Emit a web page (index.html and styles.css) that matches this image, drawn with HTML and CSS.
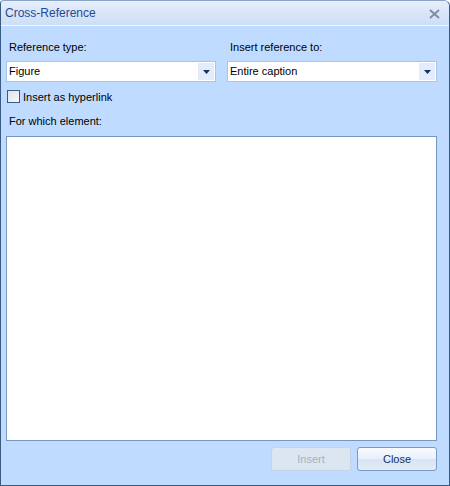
FILE: index.html
```html
<!DOCTYPE html>
<html>
<head>
<meta charset="utf-8">
<link rel="stylesheet" href="styles.css">
</head>
<body>
<div class="window">
  <div class="titlebar">
    <span class="title">Cross-Reference</span>
    <svg class="close-x" width="11" height="10" viewBox="0 0 11 10"><path d="M1 1 L10 9 M10 1 L1 9" stroke="#7a8aa0" stroke-width="1.7"/></svg>
  </div>
  <div class="content">
    <div class="row-two">
      <div class="field">
        <div class="label">Reference type:</div>
        <div class="combo"><span class="combo-text">Figure</span><span class="combo-btn"><svg width="7" height="4" viewBox="0 0 7 4"><path d="M0 0 H7 L3.5 4 Z" fill="#15306b"/></svg></span></div>
      </div>
      <div class="field">
        <div class="label">Insert reference to:</div>
        <div class="combo"><span class="combo-text">Entire caption</span><span class="combo-btn"><svg width="7" height="4" viewBox="0 0 7 4"><path d="M0 0 H7 L3.5 4 Z" fill="#15306b"/></svg></span></div>
      </div>
    </div>
    <label class="check"><span class="box"></span><span>Insert as hyperlink</span></label>
    <div class="label label-which">For which element:</div>
    <div class="listbox"></div>
    <div class="buttons">
      <button class="btn disabled">Insert</button>
      <button class="btn">Close</button>
    </div>
  </div>
</div>
</body>
</html>
```
FILE: styles.css
```css
* { box-sizing: border-box; }
html, body { margin: 0; padding: 0; background: #ffffff; }
body { font-family: "Liberation Sans", Arial, sans-serif; font-size: 11px; color: #000; }
.window {
  width: 450px; height: 486px;
  border: 1px solid #3b5a82;
  border-top-color: #8aa4c8;
  border-radius: 4px 6px 0 0;
  background: #bfdbff;
  display: flex; flex-direction: column;
  overflow: hidden;
}
.titlebar {
  height: 25px;
  flex: none;
  display: flex; align-items: center; justify-content: space-between;
  padding: 0 9px 0 4px;
  background: linear-gradient(#e6effb, #d6e4f7 60%, #cddff6);
  border-bottom: 1px solid #f4f8fe;
}
.title { color: #1e4a97; font-size: 12px; }
.close-x { margin-top: 1px; }
.content {
  flex: 1;
  display: flex; flex-direction: column;
  padding: 14px 12px 14px 5px;
}
.row-two { display: flex; gap: 11px; }
.field { width: 210px; display: flex; flex-direction: column; }
.label { padding-left: 3px; height: 14px; line-height: 14px; margin-bottom: 7px; }
.combo {
  height: 21px;
  background: #fff;
  border: 1px solid #a9c4e8;
  display: flex; align-items: stretch;
}
.combo-text { flex: 1; padding-left: 2px; line-height: 19px; }
.combo-btn {
  width: 16px; margin: 1px;
  background: #e2ecfa;
  display: flex; align-items: center; justify-content: center;
}
.check { display: flex; align-items: center; gap: 3px; margin-top: 8px; padding-left: 1px; height: 13px; }
.box {
  width: 13px; height: 13px;
  border: 1px solid #3d5a80;
  background: linear-gradient(135deg, #dde3ea, #f6f8fa);
}
.label-which { margin-top: 11px; margin-bottom: 8px; }
.listbox {
  flex: 1;
  background: #fff;
  border: 1px solid #7896c2;
}
.buttons { display: flex; justify-content: flex-end; gap: 6px; margin-top: 6px; }
.btn {
  width: 80px; height: 24px;
  font-family: inherit; font-size: 11px;
  border: 1px solid #7c99c2;
  border-radius: 3px;
  background: linear-gradient(#f8fbff, #e8f0fb 50%, #d7e4f5 51%, #e3ecf8);
  color: #15305f;
  padding: 0;
}
.btn.disabled {
  border-color: #c4d4e6;
  background: #dce6f1;
  color: #a3b1c2;
}
```
